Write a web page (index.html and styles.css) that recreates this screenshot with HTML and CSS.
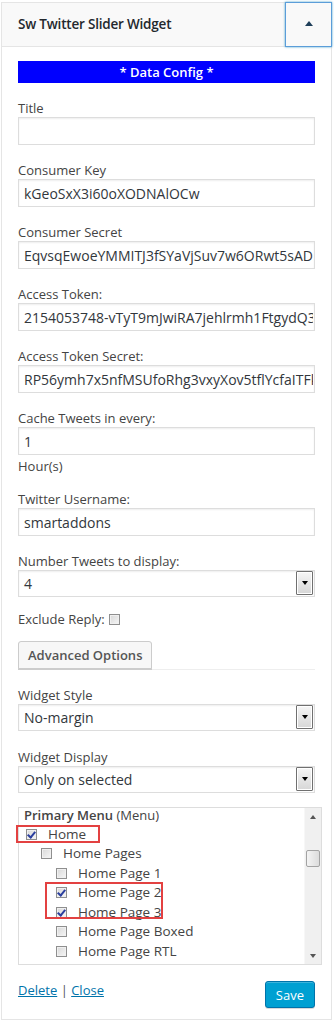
FILE: index.html
```html
<!DOCTYPE html>
<html lang="en">
<head>
    <link rel="stylesheet" href="styles.css">
</head>
<body>
    <div class="widget">
        <div class="widget-top">
            <h3 class="widget-title">Sw Twitter Slider Widget</h3>
            <button class="widget-toggle"><span class="toggle-arrow"></span></button>
        </div>

        <div class="widget-inside">
            <div class="data-config">* Data Config *</div>

            <div class="field">
                <label>Title</label>
                <input class="widefat" type="text" value="">
            </div>
            <div class="field">
                <label>Consumer Key</label>
                <input class="widefat" type="text" value="kGeoSxX3i60oXODNAlOCw">
            </div>
            <div class="field">
                <label>Consumer Secret</label>
                <input class="widefat" type="text" value="EqvsqEwoeYMMITJ3fSYaVjSuv7w6ORwt5sADzKvJb9k">
            </div>
            <div class="field">
                <label>Access Token:</label>
                <input class="widefat" type="text" value="2154053748-vTyT9mJwiRA7jehlrmh1FtgydQ3sbDtz">
            </div>
            <div class="field">
                <label>Access Token Secret:</label>
                <input class="widefat" type="text" value="RP56ymh7x5nfMSUfoRhg3vxyXov5tflYcfaITFkWm0">
            </div>
            <div class="field">
                <label>Cache Tweets in every:</label>
                <input class="widefat" type="text" value="1">
                <div class="field-note">Hour(s)</div>
            </div>
            <div class="field field-after-note">
                <label>Twitter Username:</label>
                <input class="widefat" type="text" value="smartaddons">
            </div>
            <div class="field">
                <label>Number Tweets to display:</label>
                <div class="select"><span class="select-value">4</span><span class="select-arrow"></span></div>
            </div>

            <div class="check-line">Exclude Reply: <span class="checkbox"></span></div>

            <div class="advanced">
                <button class="button">Advanced Options</button>
            </div>

            <div class="field">
                <label>Widget Style</label>
                <div class="select"><span class="select-value">No-margin</span><span class="select-arrow"></span></div>
            </div>
            <div class="field field-display">
                <label>Widget Display</label>
                <div class="select"><span class="select-value">Only on selected</span><span class="select-arrow"></span></div>
            </div>

            <div class="menu-wrap">
                <div class="menu-list">
                    <div class="menu-items">
                        <div class="menu-head"><b>Primary Menu</b> (Menu)</div>
                        <div class="menu-row level-0"><span class="checkbox checked"></span>Home</div>
                        <div class="menu-row level-1"><span class="checkbox"></span>Home Pages</div>
                        <div class="menu-row level-2"><span class="checkbox"></span>Home Page 1</div>
                        <div class="menu-row level-2"><span class="checkbox checked"></span>Home Page 2</div>
                        <div class="menu-row level-2"><span class="checkbox checked"></span>Home Page 3</div>
                        <div class="menu-row level-2"><span class="checkbox"></span>Home Page Boxed</div>
                        <div class="menu-row level-2"><span class="checkbox"></span>Home Page RTL</div>
                        <div class="menu-row level-2"><span class="checkbox"></span></div>
                    </div>
                    <div class="scrollbar">
                        <span class="scroll-btn"><span class="scroll-up"></span></span>
                        <span class="scroll-thumb"></span>
                        <span class="scroll-space"></span>
                        <span class="scroll-btn"><span class="scroll-down"></span></span>
                    </div>
                </div>
                <div class="mark mark-home"></div>
                <div class="mark mark-pages"></div>
            </div>

            <div class="widget-control">
                <div class="control-links"><a href="#">Delete</a> | <a href="#">Close</a></div>
                <button class="button-primary">Save</button>
            </div>
        </div>
    </div>
</body>
</html>
```

FILE: styles.css
```css
body {
    margin: 0;
    font-family: 'Open Sans', sans-serif;
    font-size: 13px;
    color: #444;
    background: #fff;
}

.widget {
    margin: 2px 2px 0 1px;
    border: 1px solid #e5e5e5;
    background: #fff;
    height: 1018px;
    box-sizing: border-box;
}

.widget-top {
    display: flex;
    height: 43px;
    background: #f9f9f9;
    border-bottom: 1px solid #e5e5e5;
}

.widget-title {
    flex: 1;
    margin: 0;
    padding-left: 16px;
    font-size: 13.5px;
    font-weight: 600;
    letter-spacing: -0.2px;
    line-height: 43px;
    color: #23282d;
}

.widget-toggle {
    width: 47px;
    margin: -1px -1px -1px 0;
    padding: 0;
    border: 1px solid #5b9dd9;
    background: #f9f9f9;
    box-shadow: 0 0 2px rgba(30, 140, 190, 0.8);
    display: flex;
    align-items: center;
    justify-content: center;
}

.toggle-arrow {
    width: 0;
    height: 0;
    border-left: 4px solid transparent;
    border-right: 4px solid transparent;
    border-bottom: 5px solid #1f3f5a;
    margin-top: -2px;
}

.widget-inside {
    padding: 14px 16px 0 16px;
}

.data-config {
    height: 22px;
    line-height: 22px;
    background: #0000ff;
    color: #fff;
    font-weight: 600;
    font-size: 13px;
    text-align: center;
}

.field {
    margin-top: 16px;
}

.field label {
    display: block;
    line-height: 18px;
}

.widefat {
    display: block;
    width: 100%;
    height: 28px;
    box-sizing: border-box;
    margin: 0;
    padding: 0 1px 0 5px;
    border: 1px solid #ddd;
    box-shadow: inset 0 1px 2px rgba(0, 0, 0, 0.07);
    font-family: 'Open Sans', sans-serif;
    font-size: 14px;
    color: #32373c;
    background: #fff;
    outline: none;
}

.field-note {
    margin-top: 2px;
    line-height: 18px;
}

.field-after-note {
    margin-top: 15px;
}

.field-display {
    margin-top: 17px;
}

.select {
    display: flex;
    height: 27px;
    box-sizing: border-box;
    border: 1px solid #ddd;
    box-shadow: inset 0 1px 2px rgba(0, 0, 0, 0.07);
    background: #fff;
}

.select-value {
    flex: 1;
    padding-left: 5px;
    line-height: 25px;
    font-size: 14px;
    color: #32373c;
}

.select-arrow {
    width: 15px;
    margin: 0 1px 1px 0;
    border: 1px solid #707070;
    border-radius: 1px;
    background: linear-gradient(#f6f6f6, #d6d6d6);
    box-shadow: inset 0 0 0 1px #fff;
    display: flex;
    align-items: center;
    justify-content: center;
}

.select-arrow::after {
    content: '';
    border-left: 3.5px solid transparent;
    border-right: 3.5px solid transparent;
    border-top: 4px solid #000;
}

.check-line {
    margin-top: 13px;
    line-height: 18px;
    display: flex;
    align-items: center;
    gap: 4px;
}

.checkbox {
    display: inline-flex;
    width: 11px;
    height: 11px;
    box-sizing: border-box;
    border: 1px solid #8f8f8f;
    background: linear-gradient(135deg, #d8d8d8, #f6f6f6);
    box-shadow: inset 0 0 0 1px #f0f0f0;
    flex: none;
}

.checkbox.checked {
    position: relative;
}

.checkbox.checked::after {
    content: '';
    position: absolute;
    left: 2px;
    top: 0;
    width: 3px;
    height: 6px;
    border: solid #2b3f9e;
    border-width: 0 2px 2px 0;
    transform: rotate(40deg);
}

.advanced {
    margin-top: 13px;
    border-bottom: 1px solid #eee;
}

.button {
    display: block;
    height: 28px;
    padding: 0 9px;
    border: 1px solid #ccc;
    border-radius: 3px 3px 0 0;
    background: #f7f7f7;
    box-shadow: 0 1px 0 #ccc;
    font-family: 'Open Sans', sans-serif;
    font-size: 13px;
    font-weight: 600;
    color: #555;
}

.menu-wrap {
    position: relative;
    margin: 14px -7px 0 0;
}

.menu-list {
    display: flex;
    height: 158px;
    box-sizing: border-box;
    border: 1px solid #ddd;
    overflow: hidden;
}

.menu-items {
    flex: 1;
    margin-top: -3px;
}

.menu-head {
    height: 19.5px;
    line-height: 21px;
    padding-left: 5px;
    white-space: nowrap;
}

.menu-head b {
    font-weight: 600;
}

.menu-row {
    height: 19.5px;
    line-height: 19.5px;
    display: flex;
    align-items: center;
    white-space: nowrap;
    font-size: 13.5px;
}

.menu-row .checkbox {
    margin-right: 11px;
}

.level-0 {
    padding-left: 7px;
}

.level-1 {
    padding-left: 22px;
}

.level-2 {
    padding-left: 37px;
}

.scrollbar {
    width: 16px;
    display: flex;
    flex-direction: column;
    background: #f0f0f0;
    border-left: 1px solid #f7f7f7;
}

.scroll-btn {
    height: 17px;
    display: flex;
    align-items: center;
    justify-content: center;
}

.scroll-up {
    border-left: 3.5px solid transparent;
    border-right: 3.5px solid transparent;
    border-bottom: 4px solid #555;
}

.scroll-down {
    border-left: 3.5px solid transparent;
    border-right: 3.5px solid transparent;
    border-top: 4px solid #555;
}

.scroll-thumb {
    height: 15px;
    margin: 25px 1px 0 1px;
    border: 1px solid #a3a3a3;
    border-radius: 2px;
    background: linear-gradient(90deg, #f4f4f4, #dcdcdc);
}

.scroll-space {
    flex: 1;
}

.mark {
    position: absolute;
    border: 2px solid #e34141;
}

.mark-home {
    left: -2px;
    top: 18px;
    width: 80px;
    height: 14px;
}

.mark-pages {
    left: 27px;
    top: 75px;
    width: 114px;
    height: 33px;
}

.widget-control {
    margin-top: 16px;
    display: flex;
    justify-content: space-between;
    align-items: flex-start;
}

.control-links {
    line-height: 18px;
    color: #555;
}

.control-links a {
    color: #0073aa;
}

.button-primary {
    height: 27px;
    padding: 0 10px;
    border: 1px solid #0073aa;
    border-radius: 3px;
    background: #00a0d2;
    box-shadow: inset 0 1px 0 rgba(120, 200, 230, 0.5), 0 1px 0 rgba(0, 0, 0, 0.15);
    color: #fff;
    font-family: 'Open Sans', sans-serif;
    font-size: 13px;
}
```
